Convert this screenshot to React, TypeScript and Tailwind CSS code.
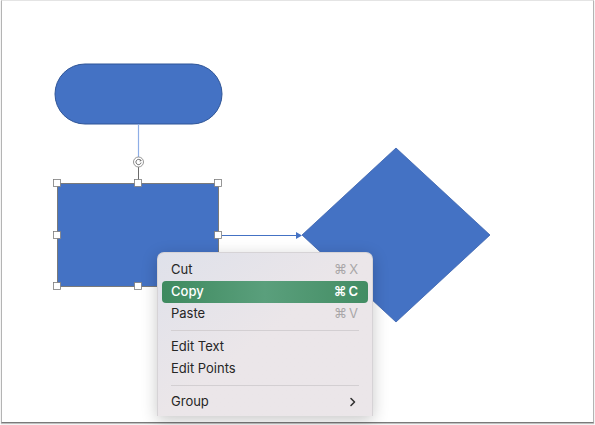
import React from 'react';

type Item =
  | { kind: 'item'; label: string; shortcut?: string; active?: boolean; submenu?: boolean }
  | { kind: 'sep' };

const menuItems: Item[] = [
  { kind: 'item', label: 'Cut', shortcut: '⌘X' },
  { kind: 'item', label: 'Copy', shortcut: '⌘C', active: true },
  { kind: 'item', label: 'Paste', shortcut: '⌘V' },
  { kind: 'sep' },
  { kind: 'item', label: 'Edit Text' },
  { kind: 'item', label: 'Edit Points' },
  { kind: 'sep' },
  { kind: 'item', label: 'Group', submenu: true },
];

// selection handles around the rectangle
const handles: [number, number][] = [
  [57, 183], [138, 183], [218, 183],
  [57, 235], [218, 235],
  [57, 286], [138, 286], [218, 286],
];

const Diagram: React.FC = () => (
  <svg width="595" height="425" viewBox="0 0 595 425" className="absolute top-0 left-0">
    {/* pill */}
    <rect x="55" y="64" width="167" height="60" rx="30" fill="#4472c4" stroke="#2f5597" strokeWidth="1" />
    {/* connector pill -> rotate handle */}
    <line x1="138.5" y1="124" x2="138.5" y2="157" stroke="#8eaee6" strokeWidth="1.2" />
    {/* rotate handle stem */}
    <line x1="138.5" y1="167" x2="138.5" y2="183" stroke="#6b6b6b" strokeWidth="1" />
    <circle cx="138.5" cy="162" r="5" fill="#ffffff" stroke="#8a8a8a" strokeWidth="0.9" />
    <path d="M140.6 160.4 A2.6 2.6 0 1 0 141.1 162.6" fill="none" stroke="#555" strokeWidth="0.9" />
    <path d="M140 159.3 L141.2 160.6 L139.6 161" fill="none" stroke="#555" strokeWidth="0.8" />
    {/* rectangle */}
    <rect x="57.5" y="183.5" width="161" height="103" fill="#4472c4" stroke="#7a7a7a" strokeWidth="1" />
    {/* arrow */}
    <line x1="222" y1="235.5" x2="297" y2="235.5" stroke="#4472c4" strokeWidth="1.2" />
    <path d="M296 232 L302 235.5 L296 239 Z" fill="#4472c4" />
    {/* diamond */}
    <path d="M396 148 L490 235 L396 322 L302 235 Z" fill="#4472c4" stroke="#3a62ad" strokeWidth="0.8" />
    {handles.map(([x, y], i) => (
      <rect key={i} x={x - 3.5} y={y - 3.5} width="7" height="7" fill="#ffffff" stroke="#7d7d7d" strokeWidth="0.8" />
    ))}
  </svg>
);

const ContextMenu: React.FC = () => (
  <div className="absolute left-[157px] top-[252px] w-[216px] h-[164px] overflow-hidden rounded-t-[7px] border border-b-0 border-[#d6d3d6] bg-gradient-to-br from-[#dfe1ea] via-[#ebe6e9] to-[#ebe6e9] shadow-[0_4px_16px_rgba(0,0,0,0.22)] px-[4px] pt-[6px]">
    {menuItems.map((item, i) =>
      item.kind === 'sep' ? (
        <div key={i} className="h-[11px] flex items-center px-[9px]">
          <div className="w-full h-px bg-[#d3cfd2]" />
        </div>
      ) : (
        <div
          key={i}
          className={`h-[22px] flex items-center justify-between pl-[9px] pr-[10px] rounded-[4px] text-[13px] ${
            item.active
              ? 'bg-gradient-to-r from-[#3e8a5f] via-[#5a9f7c] to-[#438d64] text-white font-medium'
              : 'text-[#262626]'
          }`}
        >
          <span>{item.label}</span>
          {item.shortcut && (
            <span className={item.active ? 'text-white font-semibold' : 'text-[#a9a6a8]'}>
              {item.shortcut[0]}
              <span className="ml-[2px]">{item.shortcut.slice(1)}</span>
            </span>
          )}
          {item.submenu && (
            <svg width="8" height="10" viewBox="0 0 8 10" className="mr-[1px]">
              <path d="M2 1.5 L5.5 5 L2 8.5" fill="none" stroke="#333" strokeWidth="1.6" strokeLinecap="round" strokeLinejoin="round" />
            </svg>
          )}
        </div>
      )
    )}
  </div>
);

const App: React.FC = () => {
  return (
    <div className="relative w-[595px] h-[425px] bg-white overflow-hidden" style={{ fontFamily: 'Inter, "Noto Sans", sans-serif' }}>
      {/* window frame */}
      <div className="ml-px w-[593px] h-[423px] bg-white border-l border-r border-t border-b border-l-[#b4b4b4] border-r-[#b4b4b4] border-t-[#e4e4e4] border-b-[#7a7a7a] shadow-[0_1px_1px_rgba(0,0,0,0.25)]" />
      <Diagram />
      <ContextMenu />
    </div>
  );
};

export default App;
